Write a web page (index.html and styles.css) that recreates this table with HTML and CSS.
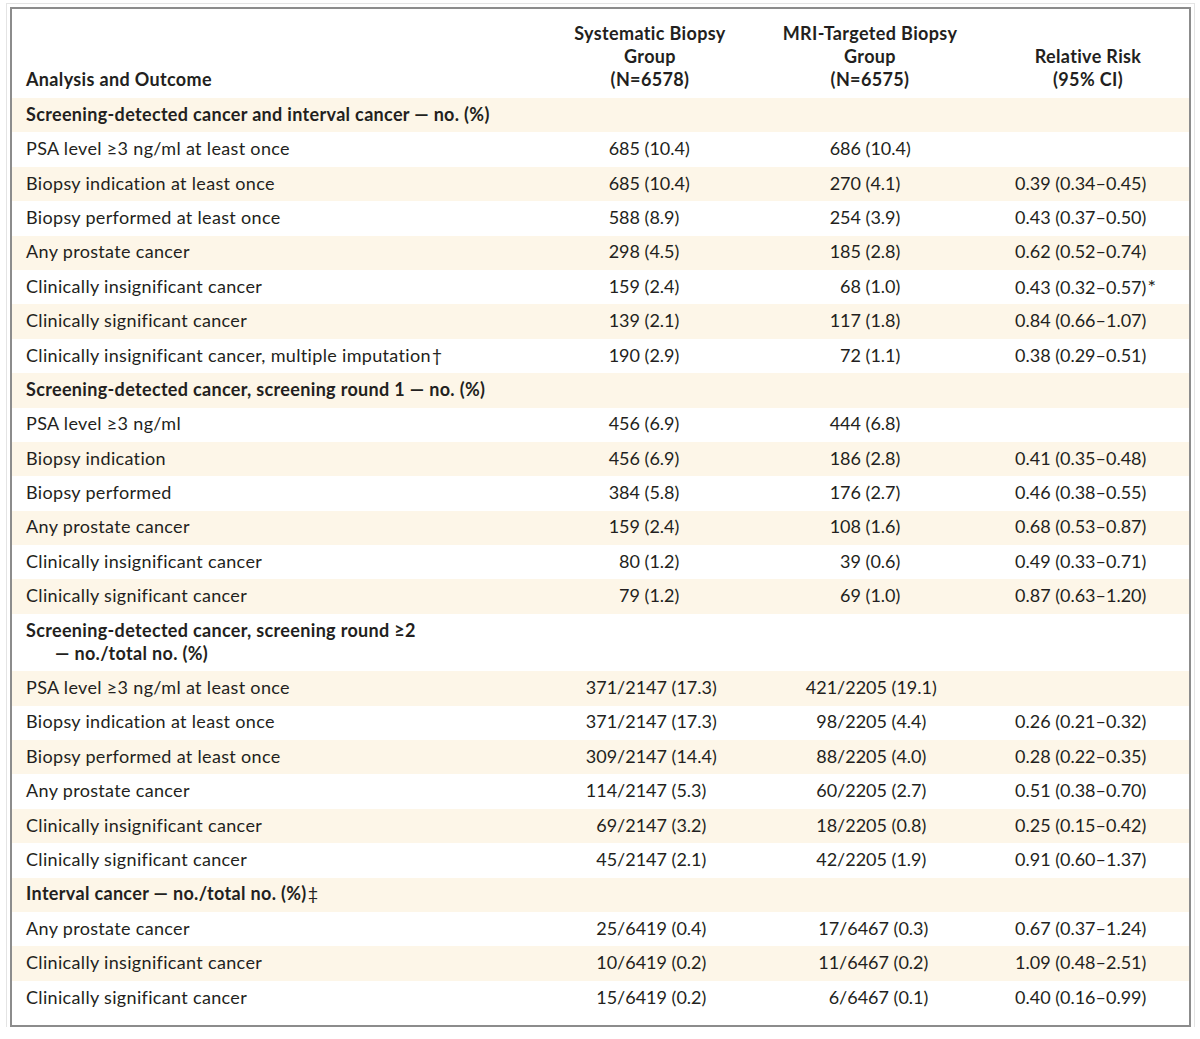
FILE: index.html
```html
<!DOCTYPE html>
<html>
<head>
<meta charset="utf-8">
<link rel="stylesheet" href="styles.css">
</head>
<body>
<div class="frame">
  <div class="head">
    <div class="c1">Analysis and Outcome</div>
    <div class="c2">Systematic Biopsy<br>Group<br>(N=6578)</div>
    <div class="c3">MRI-Targeted Biopsy<br>Group<br>(N=6575)</div>
    <div class="c4">Relative Risk<br>(95% CI)</div>
  </div>
  <div class="body">
    <div class="row sh"><div class="c1">Screening-detected cancer and interval cancer — no. (%)</div></div>
    <div class="row a"><div class="c1">PSA level ≥3 ng/ml at least once</div><div class="c2"><span class="k">685</span> (10.4)</div><div class="c3"><span class="k">686</span> (10.4)</div><div class="c4"></div></div>
    <div class="row a"><div class="c1">Biopsy indication at least once</div><div class="c2"><span class="k">685</span> (10.4)</div><div class="c3"><span class="k">270</span> (4.1)</div><div class="c4">0.39 (0.34–0.45)</div></div>
    <div class="row a"><div class="c1">Biopsy performed at least once</div><div class="c2"><span class="k">588</span> (8.9)</div><div class="c3"><span class="k">254</span> (3.9)</div><div class="c4">0.43 (0.37–0.50)</div></div>
    <div class="row a"><div class="c1">Any prostate cancer</div><div class="c2"><span class="k">298</span> (4.5)</div><div class="c3"><span class="k">185</span> (2.8)</div><div class="c4">0.62 (0.52–0.74)</div></div>
    <div class="row a"><div class="c1">Clinically insignificant cancer</div><div class="c2"><span class="k">159</span> (2.4)</div><div class="c3"><span class="k">68</span> (1.0)</div><div class="c4">0.43 (0.32–0.57)<span class="fn">*</span></div></div>
    <div class="row a"><div class="c1">Clinically significant cancer</div><div class="c2"><span class="k">139</span> (2.1)</div><div class="c3"><span class="k">117</span> (1.8)</div><div class="c4">0.84 (0.66–1.07)</div></div>
    <div class="row a"><div class="c1">Clinically insignificant cancer, multiple imputation<span class="dg">†</span></div><div class="c2"><span class="k">190</span> (2.9)</div><div class="c3"><span class="k">72</span> (1.1)</div><div class="c4">0.38 (0.29–0.51)</div></div>

    <div class="row sh"><div class="c1">Screening-detected cancer, screening round 1 — no. (%)</div></div>
    <div class="row a"><div class="c1">PSA level ≥3 ng/ml</div><div class="c2"><span class="k">456</span> (6.9)</div><div class="c3"><span class="k">444</span> (6.8)</div><div class="c4"></div></div>
    <div class="row a"><div class="c1">Biopsy indication</div><div class="c2"><span class="k">456</span> (6.9)</div><div class="c3"><span class="k">186</span> (2.8)</div><div class="c4">0.41 (0.35–0.48)</div></div>
    <div class="row a"><div class="c1">Biopsy performed</div><div class="c2"><span class="k">384</span> (5.8)</div><div class="c3"><span class="k">176</span> (2.7)</div><div class="c4">0.46 (0.38–0.55)</div></div>
    <div class="row a"><div class="c1">Any prostate cancer</div><div class="c2"><span class="k">159</span> (2.4)</div><div class="c3"><span class="k">108</span> (1.6)</div><div class="c4">0.68 (0.53–0.87)</div></div>
    <div class="row a"><div class="c1">Clinically insignificant cancer</div><div class="c2"><span class="k">80</span> (1.2)</div><div class="c3"><span class="k">39</span> (0.6)</div><div class="c4">0.49 (0.33–0.71)</div></div>
    <div class="row a"><div class="c1">Clinically significant cancer</div><div class="c2"><span class="k">79</span> (1.2)</div><div class="c3"><span class="k">69</span> (1.0)</div><div class="c4">0.87 (0.63–1.20)</div></div>

    <div class="row sh two"><div class="c1">Screening-detected cancer, screening round ≥2<br><span class="ind">— no./total no. (%)</span></div></div>
    <div class="row b"><div class="c1">PSA level ≥3 ng/ml at least once</div><div class="c2"><span class="k">371/2147</span> (17.3)</div><div class="c3"><span class="k">421/2205</span> (19.1)</div><div class="c4"></div></div>
    <div class="row b"><div class="c1">Biopsy indication at least once</div><div class="c2"><span class="k">371/2147</span> (17.3)</div><div class="c3"><span class="k">98/2205</span> (4.4)</div><div class="c4">0.26 (0.21–0.32)</div></div>
    <div class="row b"><div class="c1">Biopsy performed at least once</div><div class="c2"><span class="k">309/2147</span> (14.4)</div><div class="c3"><span class="k">88/2205</span> (4.0)</div><div class="c4">0.28 (0.22–0.35)</div></div>
    <div class="row b"><div class="c1">Any prostate cancer</div><div class="c2"><span class="k">114/2147</span> (5.3)</div><div class="c3"><span class="k">60/2205</span> (2.7)</div><div class="c4">0.51 (0.38–0.70)</div></div>
    <div class="row b"><div class="c1">Clinically insignificant cancer</div><div class="c2"><span class="k">69/2147</span> (3.2)</div><div class="c3"><span class="k">18/2205</span> (0.8)</div><div class="c4">0.25 (0.15–0.42)</div></div>
    <div class="row b"><div class="c1">Clinically significant cancer</div><div class="c2"><span class="k">45/2147</span> (2.1)</div><div class="c3"><span class="k">42/2205</span> (1.9)</div><div class="c4">0.91 (0.60–1.37)</div></div>

    <div class="row sh"><div class="c1">Interval cancer — no./total no. (%)<span class="dg">‡</span></div></div>
    <div class="row c"><div class="c1">Any prostate cancer</div><div class="c2"><span class="k">25/6419</span> (0.4)</div><div class="c3"><span class="k">17/6467</span> (0.3)</div><div class="c4">0.67 (0.37–1.24)</div></div>
    <div class="row c"><div class="c1">Clinically insignificant cancer</div><div class="c2"><span class="k">10/6419</span> (0.2)</div><div class="c3"><span class="k">11/6467</span> (0.2)</div><div class="c4">1.09 (0.48–2.51)</div></div>
    <div class="row c"><div class="c1">Clinically significant cancer</div><div class="c2"><span class="k">15/6419</span> (0.2)</div><div class="c3"><span class="k">6/6467</span> (0.1)</div><div class="c4">0.40 (0.16–0.99)</div></div>
  </div>
</div>
</body>
</html>
```
FILE: styles.css
```css
html, body {
  margin: 0;
  padding: 0;
  background: #ffffff;
}
body {
  font-family: Lato, "Liberation Sans", sans-serif;
  font-size: 18px;
  color: #231f20;
}
.frame {
  margin: 7px 0 0 10px;
  width: 1177px;
  height: 1016px;
  border: 2px solid #8c8c8c;
  outline: 1px solid #e4e4e4;
  outline-offset: 3px;
}
.head {
  display: grid;
  grid-template-columns: 528px 220px 220px 209px;
  height: 89px;
  align-items: end;
  font-weight: 700;
  line-height: 23px;
  letter-spacing: 0.35px;
}
.head > div {
  padding-bottom: 7px;
}
.head .c1 {
  padding-left: 14px;
}
.head .c2, .head .c3 {
  text-align: center;
}
.head .c4 {
  text-align: center;
  padding-left: 7px;
}
.row {
  display: grid;
  grid-template-columns: 528px 220px 220px 209px;
  height: 34.4px;
  line-height: 23px;
  box-sizing: border-box;
  padding-top: 4.8px;
  white-space: nowrap;
}
.body > .row:nth-child(odd) {
  background: #fdf6e8;
}
.row .c1 {
  padding-left: 14px;
  letter-spacing: 0.33px;
}
.row.sh .c1 {
  font-weight: 700;
  grid-column: 1 / span 4;
}
.row.two {
  height: 57.4px;
}
.ind {
  padding-left: 29px;
}
.k {
  display: inline-block;
  text-align: right;
}
.a .c2 .k { width: 100px; }
.a .c3 .k { width: 101px; }
.b .c2 .k { width: 127px; }
.b .c3 .k { width: 127px; }
.c .c2 .k { width: 127px; }
.c .c3 .k { width: 129px; }
.row .c4 {
  padding-left: 35px;
}
.fn {
  font-size: 20px;
  margin-left: 1px;
}
.dg {
  font-weight: 400;
  margin-left: 1px;
}
```
